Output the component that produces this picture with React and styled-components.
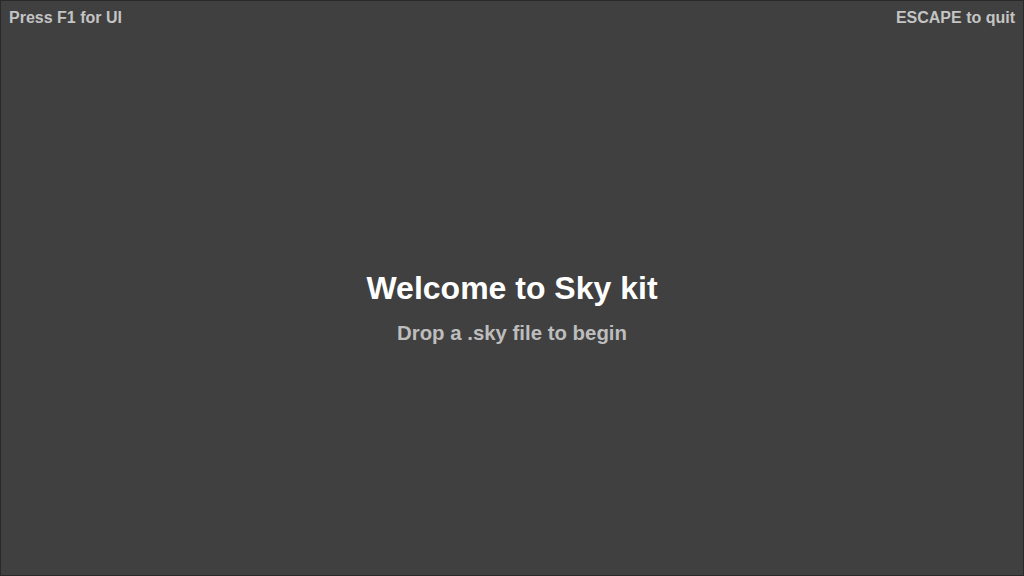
import React from "react";
import styled, { createGlobalStyle } from "styled-components";

const GlobalStyle = createGlobalStyle`
  html, body {
    margin: 0;
    padding: 0;
    background: #404040;
  }
  * { box-sizing: border-box; }
`;

const Screen = styled.div`
  width: 1024px;
  height: 576px;
  background: #404040;
  border: 1px solid #2a2a2a;
  font-family: "Liberation Sans", Arial, sans-serif;
  font-weight: bold;
  display: flex;
  flex-direction: column;
`;

const TopBar = styled.div`
  display: flex;
  justify-content: space-between;
  align-items: center;
  padding: 8px 8px 0 8px;
`;

const Hint = styled.span`
  font-size: 16px;
  line-height: 18px;
  color: #c4c4c4;
`;

const Center = styled.div`
  flex: 1;
  display: flex;
  flex-direction: column;
  align-items: center;
  justify-content: center;
  padding-top: 11px;
`;

const Title = styled.h1`
  margin: 0;
  font-size: 32px;
  line-height: 38px;
  color: #ffffff;
`;

const Subtitle = styled.p`
  margin: 14px 0 0 0;
  font-size: 20.4px;
  line-height: 24px;
  color: #bdbdbd;
`;

export default function App() {
  return (
    <>
      <GlobalStyle />
      <Screen>
        <TopBar>
          <Hint>Press F1 for UI</Hint>
          <Hint>ESCAPE to quit</Hint>
        </TopBar>
        <Center>
          <Title>Welcome to Sky kit</Title>
          <Subtitle>Drop a .sky file to begin</Subtitle>
        </Center>
      </Screen>
    </>
  );
}
